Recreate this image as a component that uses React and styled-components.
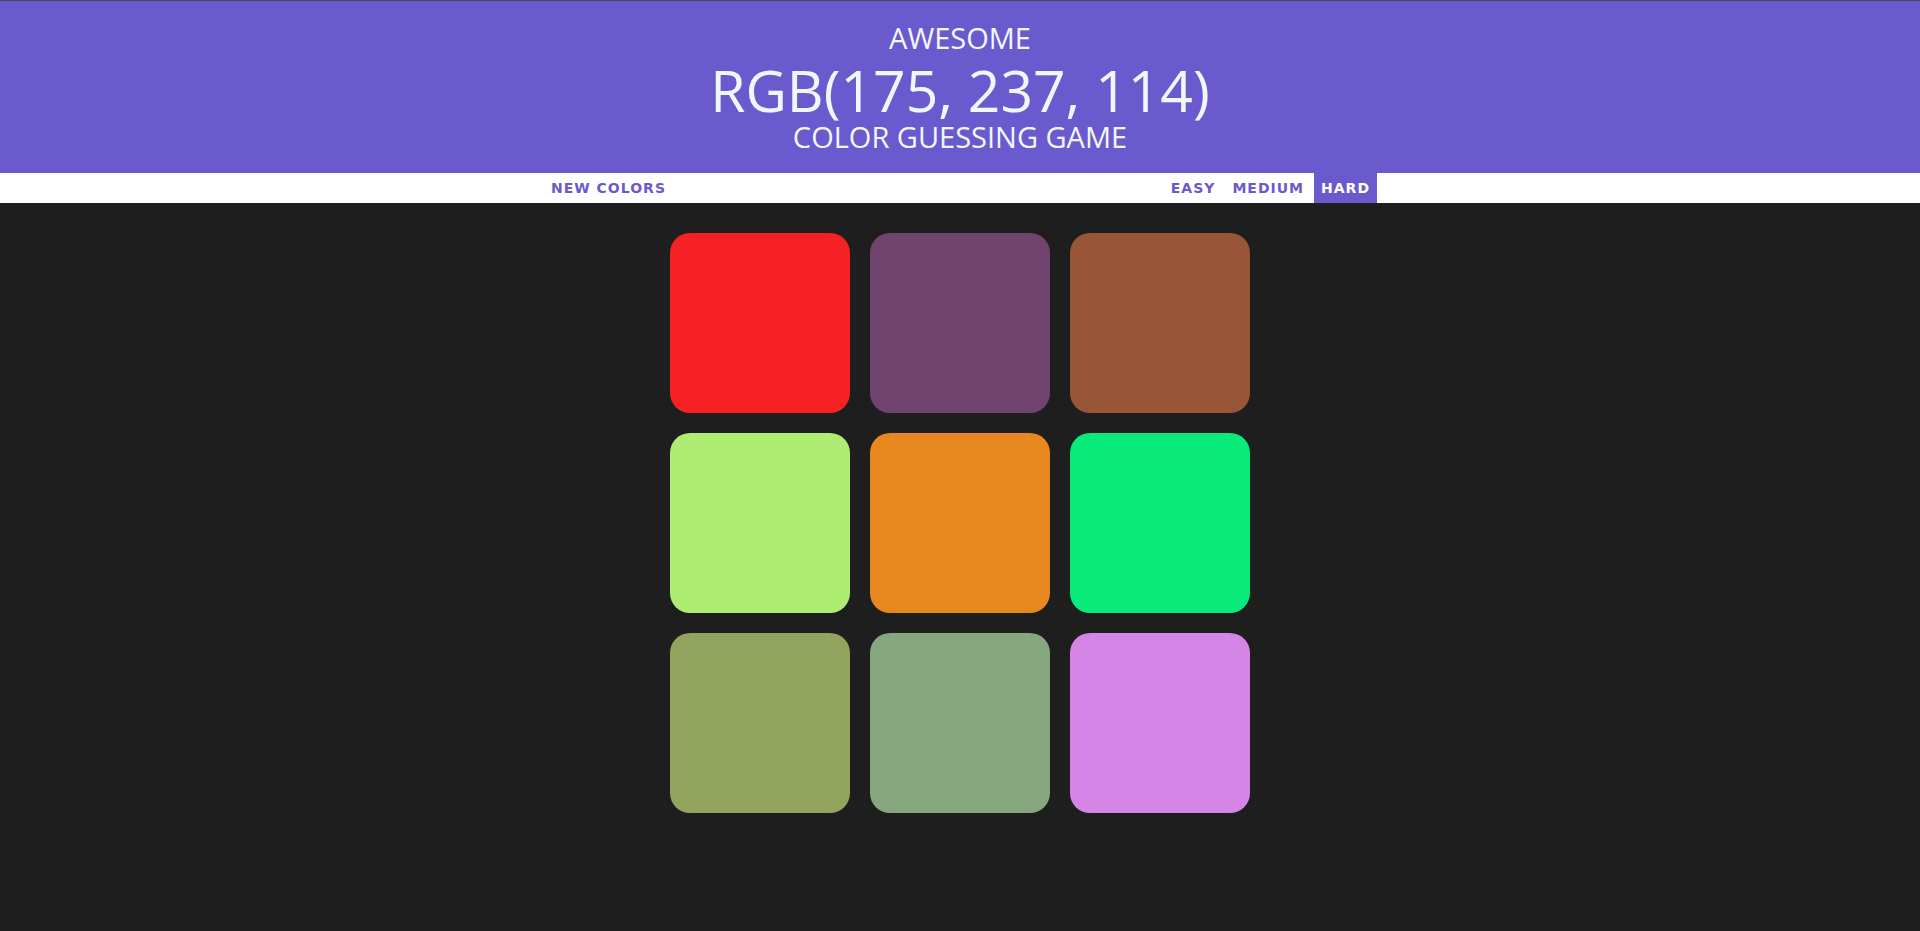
import React, { useState } from 'react';
import styled, { createGlobalStyle } from 'styled-components';

const GlobalStyle = createGlobalStyle`
  html, body {
    margin: 0;
    padding: 0;
    background-color: #1e1e1e;
    font-family: "Open Sans", "Noto Sans", sans-serif;
  }
  * {
    box-sizing: border-box;
  }
`;

const Header = styled.header`
  background-color: #6a5acd;
  border-top: 1px solid #4b4b4b;
  color: #f0f8ff;
  text-align: center;
  text-transform: uppercase;
  padding: 20px 0 24px;
  margin: 0;
`;

const Small = styled.div`
  font-size: 29px;
  line-height: ${props => props.lh}px;
  font-weight: 400;
`;

const Target = styled.div`
  font-size: 57px;
  line-height: 70px;
  font-weight: 400;
`;

const Stripe = styled.nav`
  background-color: #fff;
  height: 30px;
`;

const StripeInner = styled.div`
  width: 834px;
  height: 100%;
  margin: 0 auto;
  display: flex;
  justify-content: space-between;
  align-items: stretch;
`;

const Modes = styled.div`
  display: flex;
  gap: 3px;
`;

const Button = styled.button`
  border: none;
  margin: 0;
  height: 30px;
  padding: 0 7px 0 ${props => (props.first ? 8 : 7)}px;
  background-color: ${props => (props.selected ? '#6a5acd' : '#fff')};
  color: ${props => (props.selected ? '#fff' : '#6a5acd')};
  font-family: "DejaVu Sans", Verdana, sans-serif;
  font-size: 14px;
  font-weight: 700;
  letter-spacing: 1px;
  line-height: 30px;
  text-transform: uppercase;
  cursor: pointer;
  outline: none;

  &:hover {
    background-color: #6a5acd;
    color: #fff;
  }
`;

const Board = styled.div`
  display: grid;
  grid-template-columns: repeat(3, 180px);
  gap: 20px;
  justify-content: center;
  padding-top: 30px;
`;

const Square = styled.div`
  width: 180px;
  height: 180px;
  border-radius: 20px;
  background-color: ${props => props.color};
  cursor: pointer;
`;

const colors = [
  'rgb(245, 33, 36)',
  'rgb(113, 68, 111)',
  'rgb(152, 86, 54)',
  'rgb(175, 237, 114)',
  'rgb(230, 136, 29)',
  'rgb(8, 235, 123)',
  'rgb(146, 163, 94)',
  'rgb(134, 167, 126)',
  'rgb(213, 133, 230)'
];

function App() {
  const [mode, setMode] = useState('hard');

  return (
    <>
      <GlobalStyle />
      <Header>
        <Small lh={34}>Awesome</Small>
        <Target>RGB(175, 237, 114)</Target>
        <Small lh={24}>Color Guessing Game</Small>
      </Header>

      <Stripe>
        <StripeInner>
          <Button first>New Colors</Button>
          <Modes>
            {['easy', 'medium', 'hard'].map(m => (
              <Button key={m} selected={mode === m} onClick={() => setMode(m)}>
                {m}
              </Button>
            ))}
          </Modes>
        </StripeInner>
      </Stripe>

      <Board>
        {colors.map((c, i) => (
          <Square key={i} color={c} />
        ))}
      </Board>
    </>
  );
}

export default App;
